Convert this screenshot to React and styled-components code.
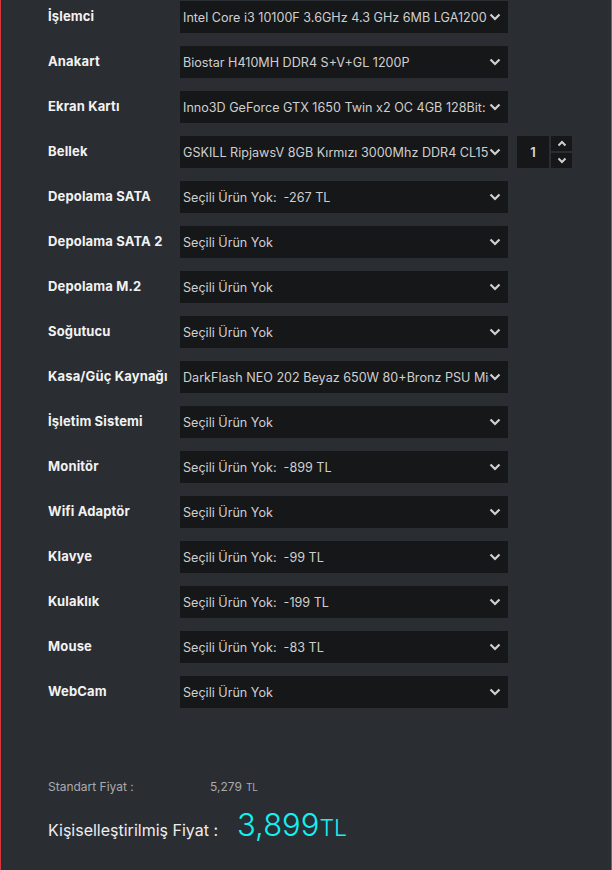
import React from "react";
import styled, { createGlobalStyle } from "styled-components";

const Global = createGlobalStyle`
  html, body { margin: 0; padding: 0; background: #18191c; }
  body { font-family: Inter, "Noto Sans", sans-serif; }
`;

const Page = styled.div`
  display: flex;
  width: 612px;
  height: 870px;
  overflow: hidden;
  background: #18191c;
`;

const Panel = styled.div`
  width: 597px;
  height: 870px;
  background: #2a2d32;
  border-left: 1px solid #d9363e;
  border-right: 1px solid #d9363e;
  padding: 1px 0 0 47px;
  box-sizing: content-box;
  display: flex;
  flex-direction: column;
`;

const Rows = styled.div`
  display: flex;
  flex-direction: column;
  gap: 13px;
`;

const Row = styled.div`
  display: flex;
  align-items: center;
  height: 32px;
`;

const Label = styled.div`
  width: 132px;
  flex: none;
  color: #f2f2f2;
  font-weight: 700;
  font-size: 13px;
  letter-spacing: 0.15px;
  white-space: nowrap;
  margin-top: -2px;
`;

const Select = styled.div`
  width: 328px;
  height: 32px;
  flex: none;
  background: #161719;
  display: flex;
  align-items: center;
  position: relative;
  box-sizing: border-box;
  padding: 0 19px 0 3px;
`;

const SelectText = styled.span`
  color: #cfcfcf;
  font-size: 12.6px;
  white-space: pre;
  overflow: hidden;
  text-overflow: clip;
  flex: 1;
`;

const Chevron = styled.svg`
  position: absolute;
  right: 7px;
  top: 12px;
`;

const Qty = styled.div`
  margin-left: 9px;
  width: 32px;
  height: 32px;
  background: #161719;
  color: #d8d8d8;
  font-size: 13px;
  font-weight: 600;
  display: flex;
  align-items: center;
  justify-content: center;
`;

const Spinner = styled.div`
  margin-left: 2px;
  display: flex;
  flex-direction: column;
  gap: 2px;
`;

const SpinBtn = styled.div`
  width: 21px;
  height: 15px;
  background: #161719;
  display: flex;
  align-items: center;
  justify-content: center;
`;

const Prices = styled.div`
  margin-top: 71px;
  display: flex;
  flex-direction: column;
`;

const StdRow = styled.div`
  display: flex;
  align-items: baseline;
  color: #a9abae;
  font-size: 12px;
  height: 16px;
`;

const StdLabel = styled.span`
  width: 162px;
`;

const Unit = styled.span`
  font-size: ${(p) => p.$size}px;
  margin-left: ${(p) => p.$gap || 0}px;
  color: ${(p) => p.$color || "inherit"};
  font-weight: ${(p) => p.$weight || 400};
`;

const CustomRow = styled.div`
  margin-top: 11px;
  display: flex;
  align-items: baseline;
  color: #eeeeee;
  font-size: 16px;
`;

const CustomLabel = styled.span`
  width: 189px;
`;

const Big = styled.span`
  color: #12f2f2;
  font-size: 31px;
  font-weight: 300;
`;

const ChevronIcon = ({ up }) => (
  <svg width="10" height="7" viewBox="0 0 10 7">
    <polyline
      points={up ? "1.5,5.5 5,2 8.5,5.5" : "1.5,1.5 5,5 8.5,1.5"}
      fill="none"
      stroke="#cfcfcf"
      strokeWidth="2"
    />
  </svg>
);

const rows = [
  ["İşlemci", "Intel Core i3 10100F 3.6GHz 4.3 GHz 6MB LGA1200 Fanlı İşlemci"],
  ["Anakart", "Biostar H410MH DDR4 S+V+GL 1200P"],
  ["Ekran Kartı", "Inno3D GeForce GTX 1650 Twin x2 OC 4GB 128Bit: GDDR6"],
  ["Bellek", "GSKILL RipjawsV 8GB Kırmızı 3000Mhz DDR4 CL15", true],
  ["Depolama SATA", "Seçili Ürün Yok:  -267 TL"],
  ["Depolama SATA 2", "Seçili Ürün Yok"],
  ["Depolama M.2", "Seçili Ürün Yok"],
  ["Soğutucu", "Seçili Ürün Yok"],
  ["Kasa/Güç Kaynağı", "DarkFlash NEO 202 Beyaz 650W 80+Bronz PSU Micro ATX Kasa"],
  ["İşletim Sistemi", "Seçili Ürün Yok"],
  ["Monitör", "Seçili Ürün Yok:  -899 TL"],
  ["Wifi Adaptör", "Seçili Ürün Yok"],
  ["Klavye", "Seçili Ürün Yok:  -99 TL"],
  ["Kulaklık", "Seçili Ürün Yok:  -199 TL"],
  ["Mouse", "Seçili Ürün Yok:  -83 TL"],
  ["WebCam", "Seçili Ürün Yok"],
];

export default function App() {
  return (
    <>
      <Global />
      <Page>
        <Panel>
          <Rows>
            {rows.map(([label, value, qty]) => (
              <Row key={label}>
                <Label>{label}</Label>
                <Select>
                  <SelectText>{value}</SelectText>
                  <Chevron width="12" height="8" viewBox="0 0 12 8">
                    <polyline points="1.5,1.5 6,6 10.5,1.5" fill="none" stroke="#d0d0d0" strokeWidth="2.2" />
                  </Chevron>
                </Select>
                {qty && (
                  <>
                    <Qty>1</Qty>
                    <Spinner>
                      <SpinBtn><ChevronIcon up /></SpinBtn>
                      <SpinBtn><ChevronIcon /></SpinBtn>
                    </Spinner>
                  </>
                )}
              </Row>
            ))}
          </Rows>
          <Prices>
            <StdRow>
              <StdLabel>Standart Fiyat :</StdLabel>
              <span>5,279</span>
              <Unit $size={10} $gap={4}>TL</Unit>
            </StdRow>
            <CustomRow>
              <CustomLabel>Kişiselleştirilmiş Fiyat :</CustomLabel>
              <Big>3,899</Big>
              <Unit $size={23} $color="#12f2f2" $weight={300}>TL</Unit>
            </CustomRow>
          </Prices>
        </Panel>
      </Page>
    </>
  );
}
